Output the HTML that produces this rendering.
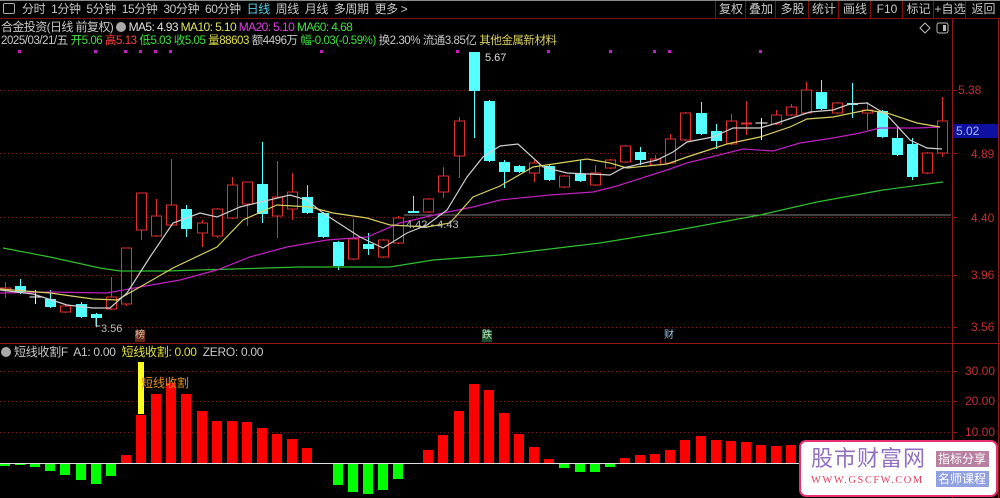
<!DOCTYPE html>
<html><head><meta charset="utf-8"><style>
*{margin:0;padding:0}
body{width:1000px;height:498px;background:#000;overflow:hidden;position:relative;font-family:"Liberation Sans","Noto Sans CJK SC",sans-serif;font-size:12px;color:#c8c8c8}
.t{position:absolute;white-space:nowrap;line-height:14px}
#top{position:absolute;left:0;top:0;width:1000px;height:19px;border-top:1px solid #888;border-bottom:1px solid #801010;box-sizing:border-box}
.btn{position:absolute;top:1px;height:17px;border-left:1px solid #801010;color:#c8c8c8;text-align:center;line-height:17px;font-size:12px}
</style></head><body>
<div id="top"></div>
<div class="t" style="left:3px;top:3px;width:12px;height:11px;border:1px solid #aaa;box-sizing:border-box;border-radius:2px"></div>
<div class="t" style="left:22px;top:2px;color:#c8c8c8;letter-spacing:-0.4px">分时&nbsp;&nbsp;1分钟&nbsp;&nbsp;5分钟&nbsp;&nbsp;15分钟&nbsp;&nbsp;30分钟&nbsp;&nbsp;60分钟&nbsp;&nbsp;<span style="color:#5ad0e8">日线</span>&nbsp;&nbsp;周线&nbsp;&nbsp;月线&nbsp;&nbsp;多周期&nbsp;&nbsp;更多 &gt;</div>
<div class="btn" style="left:715px;width:30px">复权</div>
<div class="btn" style="left:745px;width:30px">叠加</div>
<div class="btn" style="left:775px;width:33px">多股</div>
<div class="btn" style="left:808px;width:30px">统计</div>
<div class="btn" style="left:838px;width:32px">画线</div>
<div class="btn" style="left:870px;width:32px">F10</div>
<div class="btn" style="left:902px;width:31px">标记</div>
<div class="btn" style="left:933px;width:32px">+自选</div>
<div class="btn" style="left:965px;width:35px">返回</div>

<div class="t" style="left:1px;top:20px;letter-spacing:-0.6px">合金投资(日线 前复权) <span style="display:inline-block;width:10px;height:10px;border-radius:50%;background:#aaa;vertical-align:-1px"></span> <span style="color:#e0e0e0">MA5: 4.93</span> <span style="color:#e0e060">MA10: 5.10</span> <span style="color:#e040e0">MA20: 5.10</span> <span style="color:#40e040">MA60: 4.68</span></div>
<div class="t" style="left:1px;top:34px;font-size:11.5px;letter-spacing:-0.45px">2025/03/21/五 <span style="color:#40e040">开5.06</span> <span style="color:#ff4040">高5.13</span> <span style="color:#40e040">低5.03</span> <span style="color:#40e040">收5.05</span> <span style="color:#e0e040">量88603</span> 额4496万 <span style="color:#40e040">幅-0.03(-0.59%)</span> 换2.30% 流通3.85亿 <span style="color:#d8d060">其他金属新材料</span></div>

<svg width="1000" height="498" style="position:absolute;left:0;top:0" id="s">
<g stroke="#7a1818" stroke-dasharray="1 3" stroke-width="1">
<line x1="0" y1="90.5" x2="950" y2="90.5"/><line x1="0" y1="153.5" x2="950" y2="153.5"/><line x1="0" y1="217.5" x2="950" y2="217.5"/><line x1="0" y1="275.5" x2="950" y2="275.5"/><line x1="0" y1="327.5" x2="950" y2="327.5"/>
<line x1="0" y1="371.5" x2="950" y2="371.5"/><line x1="0" y1="401.5" x2="950" y2="401.5"/><line x1="0" y1="432.5" x2="950" y2="432.5"/>
</g>
<line x1="952.5" y1="19" x2="952.5" y2="498" stroke="#901818"/>
<line x1="998.5" y1="19" x2="998.5" y2="498" stroke="#901818"/>
<line x1="0" y1="343.5" x2="1000" y2="343.5" stroke="#901818"/>
<g stroke="#901818"><line x1="952" y1="90.5" x2="957" y2="90.5"/><line x1="952" y1="153.5" x2="957" y2="153.5"/><line x1="952" y1="217.5" x2="957" y2="217.5"/><line x1="952" y1="275.5" x2="957" y2="275.5"/><line x1="952" y1="327.5" x2="957" y2="327.5"/><line x1="952" y1="371.5" x2="957" y2="371.5"/><line x1="952" y1="401.5" x2="957" y2="401.5"/><line x1="952" y1="432.5" x2="957" y2="432.5"/></g>
<rect x="953" y="124" width="45" height="14" fill="#1010a0"/>
<line x1="404" y1="215" x2="951" y2="215" stroke="#808080"/>
<g fill="#c020c0"><rect x="18" y="50" width="3" height="3"/><rect x="94" y="50" width="3" height="3"/><rect x="124" y="50" width="3" height="3"/><rect x="139" y="50" width="3" height="3"/><rect x="154" y="50" width="3" height="3"/><rect x="169" y="50" width="3" height="3"/><rect x="320" y="50" width="3" height="3"/><rect x="456" y="50" width="3" height="3"/><rect x="547" y="50" width="3" height="3"/><rect x="609" y="50" width="3" height="3"/><rect x="653" y="50" width="3" height="3"/><rect x="668" y="50" width="3" height="3"/><rect x="759" y="50" width="3" height="3"/></g>
<path d="M920 28 l5 -5 l5 5 l-5 5z" fill="none" stroke="#bbb"/>
<rect x="937" y="23" width="11" height="10" rx="2" fill="none" stroke="#bbb"/><rect x="943" y="25" width="3" height="6" fill="#bbb"/>
<g id="cd"></g>
<g fill="none" stroke-width="1.2">
<polyline stroke="#30c030" points="3,248 50,257 100,268 120,271 167,271 233,269 300,267 390,267 433,260 500,255 600,243 667,232 760,215 817,202 883,190 943,182"/>
<polyline stroke="#c020c0" points="0,293 50,292 107,293 140,287 180,280 217,270 250,257 287,247 327,240 367,237 400,223 443,213 473,207 500,200 550,195 593,192 617,186 667,170 687,163 743,149 773,151 800,143 833,138 860,133 880,128 917,128 940,127"/>
<polyline stroke="#d8d060" points="0,289 50,293 93,299 117,300 140,287 173,268 217,247 243,220 277,205 310,207 333,213 367,218 390,225 427,227 450,223 473,197 500,186 533,167 587,159 610,163 627,168 667,164 687,157 727,144 760,137 790,127 807,119 833,117 867,110 887,113 917,123 940,127"/>
<polyline stroke="#d0d0d0" points="0,290 33,294 67,305 93,308 110,308 127,293 150,257 173,223 200,213 217,217 240,207 290,195 307,200 323,213 360,237 383,248 407,233 427,225 447,210 467,177 483,157 500,146 518,144 543,167 567,173 610,175 623,168 657,160 673,152 687,142 713,137 733,128 760,128 777,123 810,112 833,110 850,104 867,103 887,115 910,140 927,148 942,149"/>
</g>
<g id="bars"></g>
<line x1="0" y1="463.5" x2="951" y2="463.5" stroke="#e0e0e0"/>
<rect x="138" y="362" width="6" height="52" fill="#ffff20"/>
<path d="M96 318 v8 h4" stroke="#ccc" fill="none"/>
<rect x="800" y="441" width="197" height="55" rx="6" fill="#fff" stroke="#e83070" stroke-width="2"/>
<rect x="936" y="451" width="53" height="16" fill="#b880a0"/>
<rect x="936" y="471" width="53" height="16" fill="#90a0e0"/>
</svg>
<div class="t" style="left:101px;top:322px;color:#bbb;font-size:11px">3.56</div>
<div class="t" style="left:406px;top:218px;color:#bbb;font-size:11px">4.42 - 4.43</div>
<div class="t" style="left:485px;top:51px;color:#ddd;font-size:11px">5.67</div>
<div class="t" style="left:135px;top:330px;font-size:10px;background:#602818;color:#e0c0a0;line-height:12px">榜</div>
<div class="t" style="left:482px;top:330px;font-size:10px;background:#185028;color:#c0e0c0;line-height:12px">跌</div>
<div class="t" style="left:664px;top:330px;font-size:10px;color:#a0c0e0;line-height:12px">财</div>
<div class="t" style="left:958px;top:83px;color:#c03030">5.38</div>
<div class="t" style="left:956px;top:124px;color:#a0c0ff">5.02</div>
<div class="t" style="left:971px;top:147px;color:#c03030">4.89</div>
<div class="t" style="left:971px;top:211px;color:#c03030">4.40</div>
<div class="t" style="left:971px;top:268px;color:#c03030">3.96</div>
<div class="t" style="left:971px;top:320px;color:#c03030">3.56</div>
<div class="t" style="left:965px;top:364px;color:#c03030">30.00</div>
<div class="t" style="left:965px;top:394px;color:#c03030">20.00</div>
<div class="t" style="left:965px;top:425px;color:#c03030">10.00</div>
<div class="t" style="left:1px;top:345px;letter-spacing:-0.3px"><span style="display:inline-block;width:10px;height:10px;border-radius:50%;background:#aaa;vertical-align:-1px"></span> 短线收割F&nbsp; A1: 0.00&nbsp; <span style="color:#e0e040">短线收割: 0.00</span>&nbsp; ZERO: 0.00</div>
<div class="t" style="left:141px;top:376px;color:#e09020">短线收割</div>
<div class="t" style="left:811px;top:446px;font-size:22px;line-height:26px;color:#9070c0;letter-spacing:1px">股市财富网</div>
<div class="t" style="left:811px;top:474px;font-size:10.5px;color:#e04060;font-family:'Liberation Serif',serif;letter-spacing:1.5px">WWW.GSCFW.COM</div>
<div class="t" style="left:938px;top:452px;color:#fff;font-size:12px">指标分享</div>
<div class="t" style="left:938px;top:472px;color:#fff;font-size:12px">名师课程</div>
<script>
var C=[[288,290,282,298,'r'],[286,293,279,294,'c'],[297,297,290,304,'w'],[299,307,290,308,'c'],[306,312,304,313,'r'],[304,317,302,318,'c'],[314,318,313,327,'c'],[297,309,277,310,'r'],[248,304,248,306,'r'],[193,230,193,240,'r'],[216,236,199,237,'r'],[205,225,159,226,'r'],[209,229,205,237,'c'],[223,233,220,247,'r'],[209,236,208,238,'r'],[185,218,177,219,'r'],[182,204,182,226,'r'],[184,214,142,223,'c'],[197,216,161,238,'r'],[192,209,173,220,'r'],[197,213,185,214,'c'],[213,237,212,238,'c'],[242,266,241,270,'c'],[239,259,219,260,'r'],[244,249,233,255,'c'],[240,257,239,258,'r'],[218,243,216,244,'r'],[211,213,196,213,'c'],[199,212,198,213,'r'],[176,192,167,198,'r'],[121,156,117,178,'r'],[52,91,52,138,'c'],[101,161,100,162,'c'],[162,172,160,188,'c'],[166,172,165,173,'c'],[163,173,160,182,'r'],[166,180,165,181,'c'],[176,187,175,188,'r'],[174,181,160,182,'c'],[173,185,165,186,'r'],[160,168,159,169,'r'],[146,162,145,163,'r'],[152,160,147,165,'c'],[159,165,155,166,'r'],[139,163,134,164,'r'],[113,140,112,141,'r'],[113,134,102,135,'c'],[131,141,124,149,'c'],[121,144,114,145,'r'],[123,124,101,135,'r'],[123,123,118,140,'w'],[115,124,110,125,'r'],[107,115,104,116,'r'],[90,113,82,114,'r'],[92,109,80,110,'c'],[103,113,102,114,'r'],[103,105,83,118,'c'],[110,113,102,130,'r'],[111,137,110,138,'c'],[138,155,127,156,'c'],[144,177,138,180,'c'],[153,173,152,174,'r'],[121,153,97,157,'r']];
var B=[466,465,467,471,475,480,484,476,455,415,394,383,394,411,421,421,422,428,434,439,448,463,485,492,494,490,479,463,450,435,411,384,390,413,434,447,459,468,472,472,467,458,455,454,450,440,436,440,441,442,445,446,445,445,446,444,443,444,446,445,447,446,445];
var g=document.getElementById('cd'),h='';
C.forEach(function(c,i){var x=5+i*15.12,col=c[4]=='r'?'#e03030':c[4]=='c'?'#54ffff':'#ffffff';var cx=Math.round(x)+0.5;
h+='<line x1="'+cx+'" y1="'+c[2]+'" x2="'+cx+'" y2="'+c[3]+'" stroke="'+col+'"/>';
if(c[4]=='r')h+='<rect x="'+(cx-5)+'" y="'+c[0]+'" width="10" height="'+Math.max(1,c[1]-c[0])+'" fill="#000" stroke="'+col+'"/>';
else if(c[4]=='c')h+='<rect x="'+(cx-5.5)+'" y="'+c[0]+'" width="11" height="'+Math.max(2,c[1]-c[0])+'" fill="'+col+'"/>';
else h+='<line x1="'+(cx-6)+'" y1="'+c[0]+'" x2="'+(cx+6)+'" y2="'+c[0]+'" stroke="#fff"/>';});
g.innerHTML=h;h='';
B.forEach(function(b,i){var x=Math.round(5+i*15.12)-5;if(b==463)return;
if(b<463)h+='<rect x="'+x+'" y="'+b+'" width="10" height="'+(463-b)+'" fill="#ff0000"/>';
else h+='<rect x="'+x+'" y="464" width="10" height="'+(b-464)+'" fill="#00ff00"/>';});
document.getElementById('bars').innerHTML=h;
</script>
</body></html>
